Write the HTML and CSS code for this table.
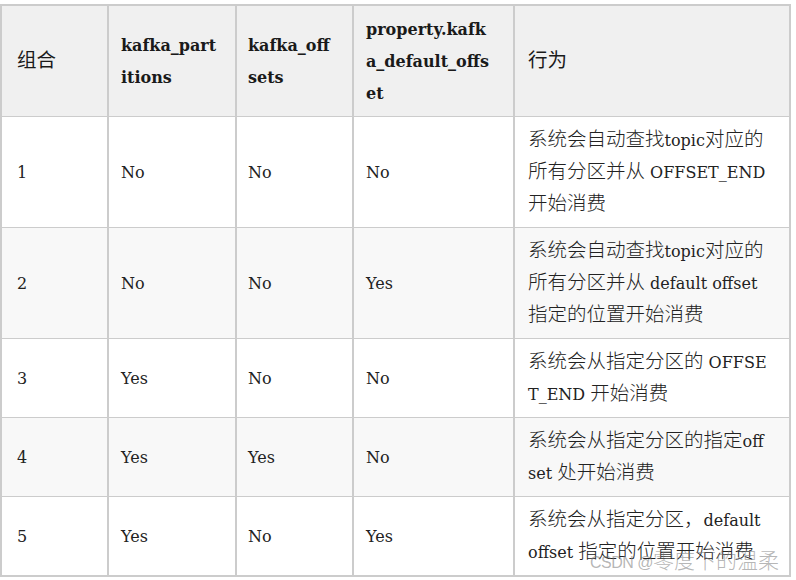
FILE: index.html
```html
<!DOCTYPE html>
<html lang="zh-CN">
<head>
<meta charset="utf-8">
<title>kafka offsets</title>
<link rel="stylesheet" href="styles.css">
</head>
<body>
<div class="page">
  <table class="grid">
    <thead>
      <tr>
        <th class="c1"><span class="zh">组合</span></th>
        <th class="c2">kafka_part<br>itions</th>
        <th class="c3">kafka_off<br>sets</th>
        <th class="c4">property.kafk<br>a_default_offs<br>et</th>
        <th class="c5"><span class="zh">行为</span></th>
      </tr>
    </thead>
    <tbody>
      <tr>
        <td>1</td>
        <td>No</td>
        <td>No</td>
        <td>No</td>
        <td><span class="zh">系统会自动查找</span>topic<span class="zh">对应的</span><br><span class="zh">所有分区并从</span> OFFSET_END<br><span class="zh">开始消费</span></td>
      </tr>
      <tr class="alt">
        <td>2</td>
        <td>No</td>
        <td>No</td>
        <td>Yes</td>
        <td><span class="zh">系统会自动查找</span>topic<span class="zh">对应的</span><br><span class="zh">所有分区并从</span> default offset<br><span class="zh">指定的位置开始消费</span></td>
      </tr>
      <tr>
        <td>3</td>
        <td>Yes</td>
        <td>No</td>
        <td>No</td>
        <td><span class="zh">系统会从指定分区的</span> OFFSE<br>T_END <span class="zh">开始消费</span></td>
      </tr>
      <tr class="alt">
        <td>4</td>
        <td>Yes</td>
        <td>Yes</td>
        <td>No</td>
        <td><span class="zh">系统会从指定分区的指定</span>off<br>set <span class="zh">处开始消费</span></td>
      </tr>
      <tr>
        <td>5</td>
        <td>Yes</td>
        <td>No</td>
        <td>Yes</td>
        <td><span class="zh">系统会从指定分区，</span>default<br>offset <span class="zh">指定的位置开始消费</span></td>
      </tr>
    </tbody>
  </table>
  <div class="watermark">CSDN @<span class="wm-zh">零度下的温柔</span></div>
</div>
</body>
</html>
```

FILE: styles.css
```css
html, body {
  margin: 0;
  padding: 0;
  background: #ffffff;
}

.page {
  position: relative;
  width: 796px;
  height: 580px;
  padding-top: 4px;
  box-sizing: border-box;
  overflow: hidden;
}

.grid {
  border-collapse: separate;
  border-spacing: 0;
  table-layout: fixed;
  width: 791px;
  border-right: 2px solid #cccccc;
  border-bottom: 2px solid #cccccc;
  font-family: "DejaVu Serif", "Noto Sans CJK SC", serif;
  font-size: 16px;
  line-height: 32px;
  color: #222222;
}

.grid th,
.grid td {
  box-sizing: border-box;
  border-left: 2px solid #cccccc;
  border-top: 1px solid #cccccc;
  padding: 8px 12px 6px 12px;
  text-align: left;
  vertical-align: middle;
  white-space: nowrap;
}

.grid th {
  background: #f0f0f0;
  font-weight: bold;
  border-top: 2px solid #cccccc;
  color: #1a1a1a;
}

.grid th:first-child,
.grid td:first-child {
  padding-left: 15px;
}

.grid th:nth-child(3),
.grid td:nth-child(3) {
  padding-left: 11px;
}

.grid th:nth-child(5),
.grid td:nth-child(5) {
  padding-left: 13px;
}

.c1 { width: 107px; }
.c2 { width: 128px; }
.c3 { width: 117px; }
.c4 { width: 161px; }
.c5 { width: 276px; }

.grid tr.alt td {
  background: #f8f8f8;
}

.zh {
  font-family: "Noto Sans CJK SC", sans-serif;
  font-size: 19.5px;
  line-height: 20px;
  font-weight: 300;
}

.grid th .zh {
  font-weight: 400;
}

.watermark {
  position: absolute;
  left: 590px;
  top: 546px;
  font-family: "Liberation Sans", "Noto Sans CJK SC", sans-serif;
  font-size: 16px;
  letter-spacing: -0.5px;
  line-height: 26px;
  color: rgba(120, 120, 120, 0.55);
  white-space: nowrap;
}

.wm-zh {
  font-family: "Noto Sans CJK SC", sans-serif;
  font-size: 21px;
  letter-spacing: 0;
  font-weight: 300;
}
```
